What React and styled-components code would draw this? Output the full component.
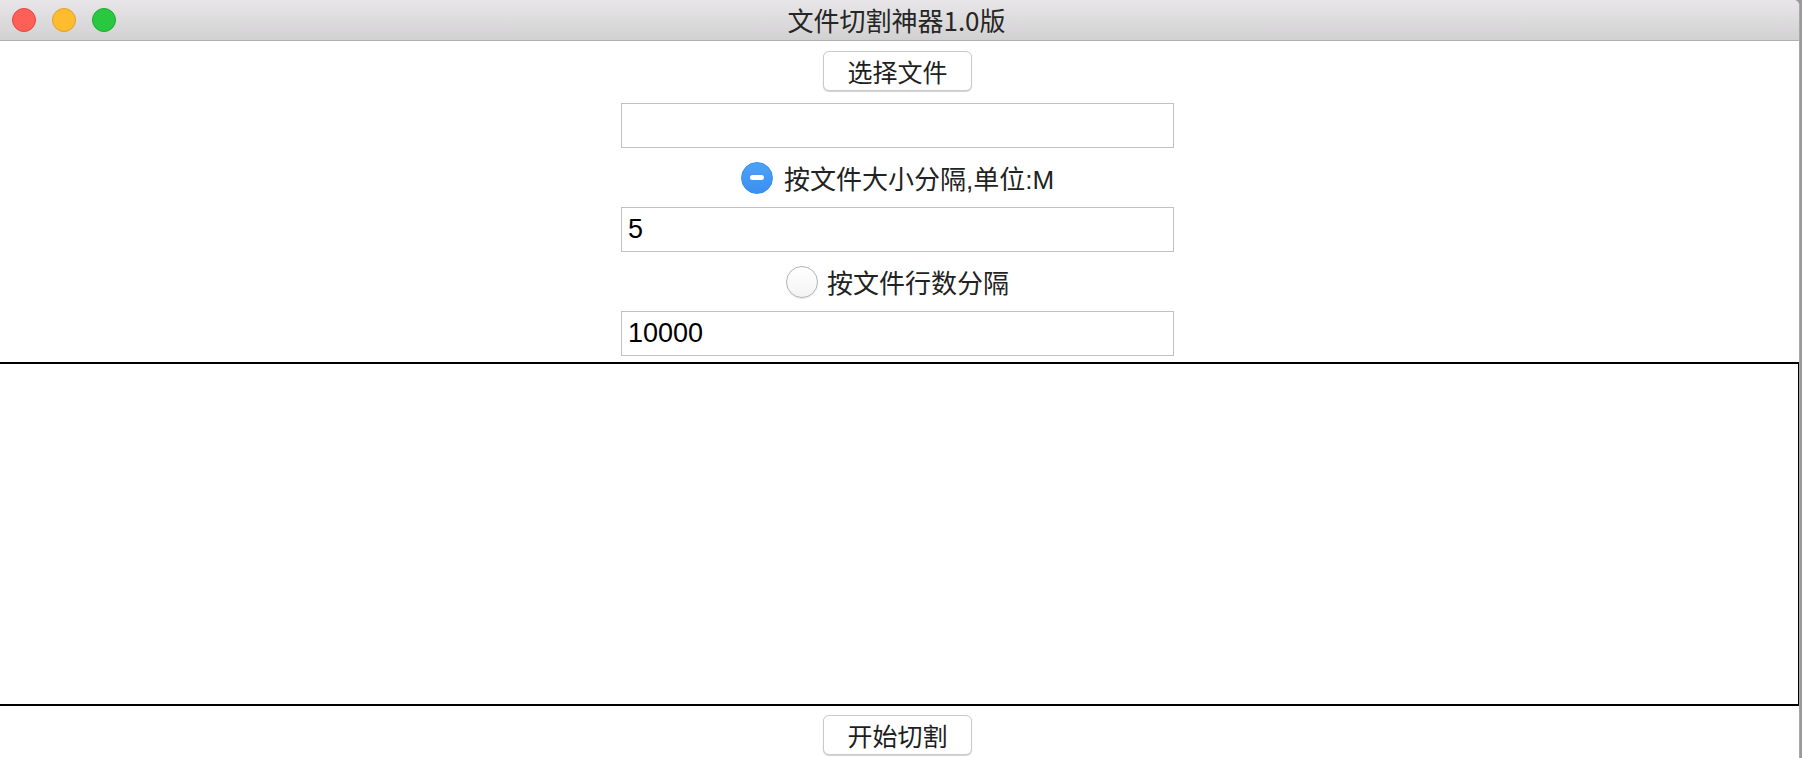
import React, { useState } from 'react';
import styled, { createGlobalStyle } from 'styled-components';

const GlobalStyle = createGlobalStyle`
  html, body {
    margin: 0;
    padding: 0;
    background: #9a9a9a;
    overflow: hidden;
  }
  body {
    font-family: "Liberation Sans", "Noto Sans CJK SC", Arial, sans-serif;
  }
`;

const Window = styled.div`
  width: 1800px;
  height: 758px;
  background: #ffffff;
  border-top-right-radius: 6px;
  overflow: hidden;
  display: flex;
  flex-direction: column;
  box-sizing: border-box;
  border-right: 1px solid #a8a8a8;
`;

const TitleBar = styled.div`
  height: 40px;
  flex-shrink: 0;
  display: flex;
  align-items: center;
  position: relative;
  background: linear-gradient(#e8e6e8, #d2d1d2);
  border-bottom: 1px solid #b0b0b0;
`;

const Lights = styled.div`
  display: flex;
  gap: 16px;
  padding-left: 12px;
`;

const Light = styled.span`
  width: 22px;
  height: 22px;
  border-radius: 50%;
  background: ${p => p.color};
  border: 1px solid ${p => p.edge};
`;

const Title = styled.div`
  position: absolute;
  left: 0;
  right: 0;
  padding-right: 6px;
  text-align: center;
  font-family: "Noto Sans CJK SC", "Liberation Sans", sans-serif;
  font-size: 26px;
  color: #262626;
  pointer-events: none;
  line-height: 40px;
`;

const Content = styled.div`
  width: 1795px;
  display: flex;
  flex-direction: column;
  align-items: center;
`;

const Button = styled.button`
  width: 149px;
  height: 40px;
  margin-top: ${p => p.$top || 0}px;
  background: #ffffff;
  border: 1px solid #c9c9c9;
  border-radius: 6px;
  box-shadow: 0 1px 1px rgba(0, 0, 0, 0.18);
  font-family: "Noto Sans CJK SC", "Liberation Sans", sans-serif;
  font-size: 25px;
  color: #1e1e1e;
  padding: 0;
  line-height: 1;
`;

const Field = styled.input`
  width: 553px;
  height: 45px;
  box-sizing: border-box;
  margin-top: ${p => p.$top || 0}px;
  border: 1px solid #c0c0c0;
  padding: 0 6px;
  font-family: "Liberation Sans", Arial, sans-serif;
  font-size: 27px;
  color: #000;
  outline: none;
`;

const RadioRow = styled.label`
  height: 59px;
  display: flex;
  align-items: center;
  gap: ${p => p.$gap || 11}px;
  font-family: "Liberation Sans", "Noto Sans CJK SC", sans-serif;
  font-size: 26px;
  color: #222;
  cursor: pointer;
`;

const RadioDot = styled.span`
  width: 32px;
  height: 32px;
  box-sizing: border-box;
  border-radius: 50%;
  display: flex;
  align-items: center;
  justify-content: center;
  background: ${p => (p.$on ? 'linear-gradient(#4fa2f7, #3a8ff0)' : 'linear-gradient(#ffffff, #f4f4f4)')};
  border: 1px solid ${p => (p.$on ? '#3a8df0' : '#b5b5b5')};
  box-shadow: ${p => (p.$on ? 'none' : '0 1px 1px rgba(0,0,0,0.1)')};
`;

const Dash = styled.span`
  width: 14px;
  height: 5px;
  border-radius: 3px;
  background: #ffffff;
`;

const LogBox = styled.textarea`
  width: 1802px;
  height: 344px;
  margin-top: 6px;
  margin-left: -2px;
  box-sizing: border-box;
  border: 2px solid #000;
  resize: none;
  outline: none;
  display: block;
`;

const Bottom = styled.div`
  display: flex;
  justify-content: center;
  width: 1795px;
`;

export default function App() {
  const [mode, setMode] = useState('size');
  const [size, setSize] = useState('5');
  const [lines, setLines] = useState('10000');

  return (
    <>
      <GlobalStyle />
      <Window>
        <TitleBar>
          <Lights>
            <Light color="#fe5f57" edge="#e2463f" />
            <Light color="#febc2e" edge="#dea123" />
            <Light color="#29c840" edge="#1eaa2f" />
          </Lights>
          <Title>文件切割神器1.0版</Title>
        </TitleBar>
        <Content>
          <Button $top={10}>选择文件</Button>
          <Field $top={12} readOnly value="" />
          <RadioRow onClick={() => setMode('size')}>
            <RadioDot $on={mode === 'size'}>{mode === 'size' && <Dash />}</RadioDot>
            按文件大小分隔,单位:M
          </RadioRow>
          <Field value={size} onChange={e => setSize(e.target.value)} />
          <RadioRow $gap={9} onClick={() => setMode('lines')}>
            <RadioDot $on={mode === 'lines'}>{mode === 'lines' && <Dash />}</RadioDot>
            按文件行数分隔
          </RadioRow>
          <Field value={lines} onChange={e => setLines(e.target.value)} />
        </Content>
        <LogBox />
        <Bottom>
          <Button $top={9}>开始切割</Button>
        </Bottom>
      </Window>
    </>
  );
}
